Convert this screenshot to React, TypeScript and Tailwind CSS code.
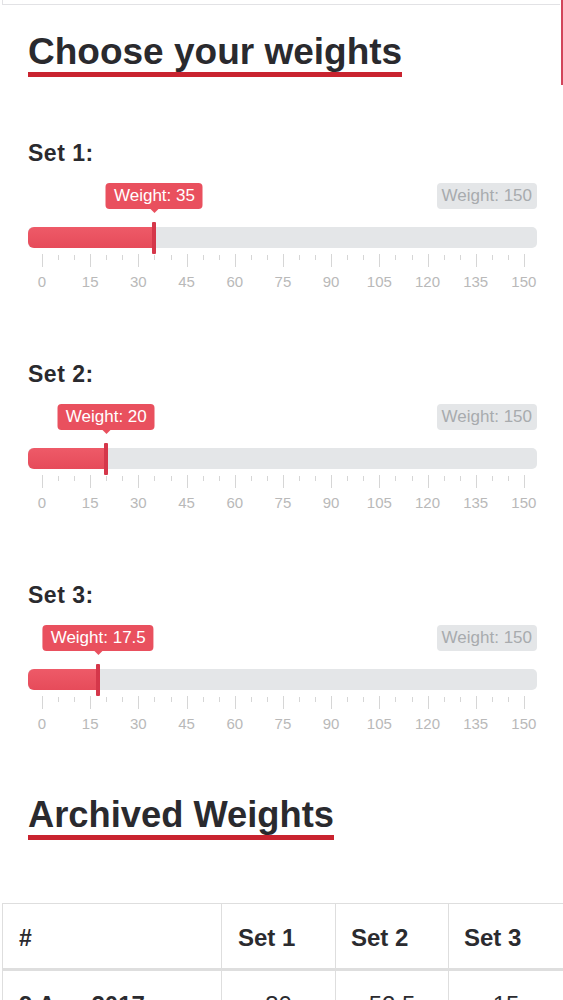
import React from "react";

const TRACK_W = 509;
const SCALE_L = 14;
const SCALE_W = 482;
const LABELS = [0, 15, 30, 45, 60, 75, 90, 105, 120, 135, 150];

function Heading({ children, small }: { children: React.ReactNode; small?: boolean }) {
  return (
    <div>
      <h2
        className={
          small
            ? "inline-block text-[36.3px] leading-[40px] font-bold text-[#2a2a2e] border-b-[5px] border-[#c9232f]"
            : "inline-block text-[37px] leading-[40px] font-bold text-[#2a2a2e] border-b-[5px] border-[#c9232f]"
        }
      >
        {children}
      </h2>
    </div>
  );
}

function Ticks() {
  const lines = [];
  for (let i = 0; i <= 30; i++) {
    const x = Math.round(SCALE_L + (i * SCALE_W) / 30) + 0.5;
    const major = i % 3 === 0;
    lines.push(
      <line key={i} x1={x} x2={x} y1={major ? 1 : 2} y2={major ? 14 : 7} stroke="#d6d6d6" strokeWidth={1} />
    );
  }
  return (
    <svg width={TRACK_W} height={14} className="block mt-[5px]">
      {lines}
    </svg>
  );
}

function SetSlider({ title, value, first }: { title: string; value: number; first?: boolean }) {
  const x = SCALE_L + (value / 150) * SCALE_W;
  return (
    <div className={first ? "mt-[62px]" : "mt-[69px]"}>
      <div className="text-[23px] leading-[28px] font-bold tracking-[0.5px] text-[#2a2a2e]">{title}</div>
      <div className="mt-[16px]">
        <div className="relative h-[26px] flex justify-end">
          <div className="absolute top-0 -translate-x-1/2 flex flex-col items-center" style={{ left: x }}>
            <div className="bg-[#e9505e] rounded-[4px] px-[8px] text-white text-[17px] leading-[26px] whitespace-nowrap">
              Weight: {value}
            </div>
            <div className="w-0 h-0 border-l-[4px] border-r-[4px] border-t-[4px] border-l-transparent border-r-transparent border-t-[#e9505e]" />
          </div>
          <div className="bg-[#e4e6e8] text-[#a8abae] rounded-[4px] px-[5px] text-[17px] leading-[26px] whitespace-nowrap">
            Weight: 150
          </div>
        </div>
        <div className="relative mt-[18px] h-[21px] rounded-[5px] bg-[#e4e6e8]">
          <div className="absolute left-0 top-0 h-full rounded-l-[6px] bg-gradient-to-b from-[#ee5a68] to-[#e64b5a]" style={{ width: x }} />
          <div className="absolute top-[-5px] h-[32px] w-[4px] -translate-x-1/2 rounded-[1px] bg-[#d5374a]" style={{ left: x }} />
        </div>
        <Ticks />
        <div className="mt-[5px] ml-[-1px] mr-[-2px] flex justify-between">
          {LABELS.map((l) => (
            <div key={l} className="w-[30px] text-center text-[15px] leading-[19px] text-[#b9b9b9]">
              {l}
            </div>
          ))}
        </div>
      </div>
    </div>
  );
}

export default function App() {
  return (
    <div
      className="relative h-[1000px] overflow-hidden bg-white"
      style={{ fontFamily: '"Liberation Sans", Arial, sans-serif' }}
    >
      <div className="ml-[2px] mr-[3px] h-[5px] border-l border-b border-[#e2e2e5]" />
      <div className="absolute right-0 top-0 w-[2px] h-[85px] bg-[#d2445a]" />
      <div className="pl-[28px] pr-[26px]">
        <div className="mt-[27px]">
          <Heading>Choose your weights</Heading>
        </div>
        <SetSlider title="Set 1:" value={35} first />
        <SetSlider title="Set 2:" value={20} />
        <SetSlider title="Set 3:" value={17.5} />
        <div className="mt-[62px]">
          <Heading small>Archived Weights</Heading>
        </div>
        <table className="mt-[63px] ml-[-26px] w-[561px] table-fixed border-collapse text-[#2b2b2f]">
          <colgroup>
            <col className="w-[219px]" />
            <col className="w-[114px]" />
            <col className="w-[113px]" />
            <col className="w-[115px]" />
          </colgroup>
          <thead>
            <tr>
              <th className="h-[66px] border border-b-[3px] border-[#dedede] pl-[16px] pt-[4px] text-left text-[23px] font-bold">#</th>
              <th className="h-[66px] border border-b-[3px] border-[#dedede] pl-[16px] pt-[4px] text-left text-[24px] font-bold">Set 1</th>
              <th className="h-[66px] border border-b-[3px] border-[#dedede] pl-[15px] pt-[4px] text-left text-[24px] font-bold">Set 2</th>
              <th className="h-[66px] border border-b-[3px] border-[#dedede] pl-[15px] pt-[4px] text-left text-[24px] font-bold">Set 3</th>
            </tr>
          </thead>
          <tbody>
            <tr>
              <td className="h-[65px] border border-[#dedede] pl-[16px] pt-[4px] text-left text-[24px] font-bold whitespace-nowrap">9 Aug 2017</td>
              <td className="h-[65px] border border-[#dedede] pt-[4px] text-center text-[24px]">30</td>
              <td className="h-[65px] border border-[#dedede] pt-[4px] text-center text-[24px]">52.5</td>
              <td className="h-[65px] border border-[#dedede] pt-[4px] text-center text-[24px]">15</td>
            </tr>
          </tbody>
        </table>
      </div>
    </div>
  );
}
